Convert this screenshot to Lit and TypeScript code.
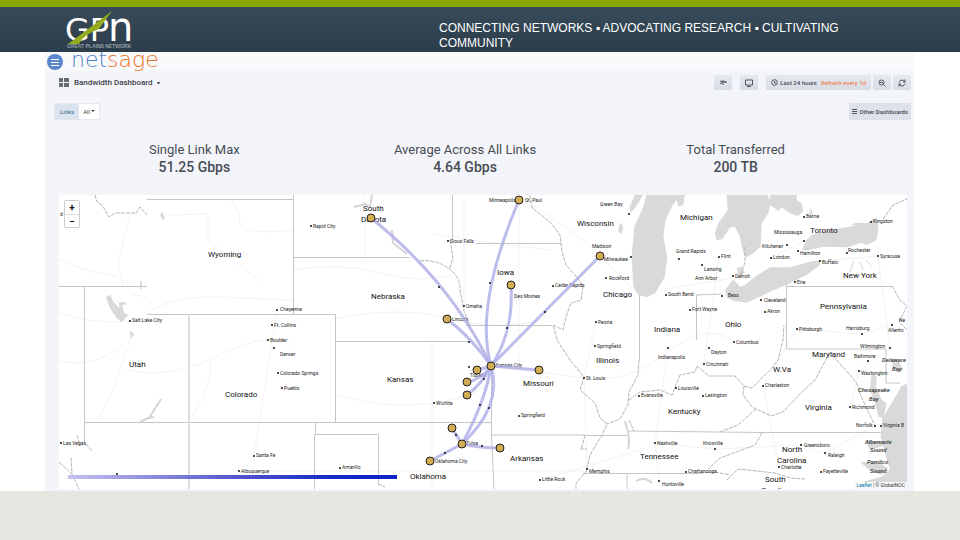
import { LitElement, css, html, svg } from "lit";
import { customElement } from "lit/decorators.js";

type Label = [name: string, x: number, y: number];
type City = [name: string, x: number, y: number, dotX: number, dotY: number];

const states: Label[] = [
  ["Wyoming", 208, 257], ["South", 363, 211], ["Dakota", 361, 222], ["Nebraska", 371, 299],
  ["Wisconsin", 577, 226], ["Iowa", 497, 275], ["Chicago", 603, 297], ["Michigan", 680, 220],
  ["Toronto", 810, 233], ["New York", 843, 278], ["Pennsylvania", 820, 309], ["Ohio", 725, 327],
  ["Indiana", 654, 332], ["Illinois", 596, 363], ["Utah", 129, 367], ["Colorado", 225, 397],
  ["Kansas", 387, 382], ["Missouri", 523, 386], ["Maryland", 812, 357], ["W.Va", 773, 372],
  ["Virginia", 805, 410], ["Kentucky", 668, 414], ["Tennessee", 640, 459], ["Arkansas", 510, 461],
  ["Oklahoma", 410, 479], ["North", 782, 452], ["Carolina", 777, 463], ["South", 765, 482],
  ["Carolina", 761, 493],
];

const cities: City[] = [
  ["d", 60, 216, 0, 0],
  ["Rapid City", 313, 228, 311, 226], ["Sioux Falls", 450, 243, 448, 241],
  ["Cheyenne", 280, 311, 277, 310], ["Ft. Collins", 274, 327, 272, 325],
  ["Boulder", 270, 342, 268, 340], ["Denver", 280, 356, 274, 348],
  ["Colorado Springs", 280, 375, 278, 373], ["Pueblo", 284, 390, 282, 388],
  ["Salt Lake City", 132, 322, 130, 321], ["Las Vegas", 63, 445, 61, 443],
  ["Santa Fe", 256, 457, 254, 456], ["Albuquerque", 241, 473, 239, 471],
  ["Amarillo", 342, 469, 340, 468], ["Wichita", 436, 405, 434, 403],
  ["Omaha", 466, 308, 464, 306], ["Lincoln", 452, 321, 0, 0],
  ["Minneapolis", 489, 202, 0, 0], ["St. Paul", 525, 202, 0, 0],
  ["Green Bay", 600, 206, 629, 214], ["Madison", 592, 248, 0, 0],
  ["Milwaukee", 604, 261, 631, 257], ["Rockford", 609, 280, 606, 278],
  ["Cedar Rapids", 555, 287, 553, 286], ["Des Moines", 514, 298, 0, 0],
  ["Peoria", 598, 324, 596, 322], ["Springfield", 597, 348, 595, 346],
  ["Kansas City", 496, 367, 0, 0], ["Topeka", 470, 377, 469, 367],
  ["St. Louis", 586, 380, 584, 378], ["Springfield", 521, 417, 519, 416],
  ["Tulsa", 466, 445, 0, 0], ["Oklahoma City", 435, 463, 0, 0],
  ["Little Rock", 542, 481, 540, 480], ["Memphis", 589, 473, 587, 469],
  ["Nashville", 657, 445, 655, 443], ["Huntsville", 662, 486, 659, 481],
  ["Chattanooga", 688, 473, 686, 472], ["Knoxville", 703, 445, 715, 449],
  ["Evansville", 641, 397, 639, 396], ["Louisville", 678, 390, 676, 388],
  ["Lexington", 705, 397, 703, 396], ["Indianapolis", 658, 359, 668, 348],
  ["Dayton", 711, 354, 709, 348], ["Cincinnati", 706, 366, 704, 364],
  ["Columbus", 736, 344, 734, 342], ["Fort Wayne", 692, 311, 690, 310],
  ["South Bend", 668, 296, 666, 295], ["Grand Rapids", 676, 253, 679, 259],
  ["Flint", 721, 258, 719, 257], ["Lansing", 704, 271, 702, 265],
  ["Ann Arbor", 695, 280, 0, 0], ["Detroit", 735, 278, 733, 276],
  ["Bess", 728, 297, 722, 296], ["Cleveland", 764, 302, 761, 300],
  ["Akron", 767, 313, 765, 312], ["Erie", 797, 284, 795, 282],
  ["London", 773, 259, 771, 258], ["Kitchener", 762, 248, 787, 245],
  ["Hamilton", 800, 255, 798, 251], ["Mississauga", 774, 234, 804, 241],
  ["Barrie", 806, 218, 804, 217], ["Kingston", 873, 223, 871, 222],
  ["Rochester", 848, 252, 847, 253], ["Buffalo", 822, 264, 820, 261],
  ["Syracuse", 880, 258, 878, 256], ["Pittsburgh", 799, 331, 797, 329],
  ["Harrisburg", 846, 330, 862, 334], ["Allento", 888, 332, 892, 325],
  ["Ne", 899, 322, 0, 0], ["Wilmington", 860, 348, 890, 348],
  ["Baltimore", 854, 358, 868, 361], ["Washington", 861, 375, 859, 371],
  ["Charleston", 765, 387, 763, 386], ["Richmond", 852, 409, 850, 407],
  ["Norfolk", 856, 427, 875, 426], ["Virginia B", 883, 427, 881, 426],
  ["Greensboro", 804, 447, 801, 445], ["Raleigh", 828, 457, 825, 453],
  ["Charlotte", 781, 469, 779, 467], ["Fayetteville", 823, 473, 821, 472],
];

const waters: Label[] = [
  ["Delaware", 882, 362], ["Bay", 892, 371], ["Chesapeake", 858, 392], ["Bay", 869, 401],
  ["Albemarle", 865, 444], ["Sound", 870, 452], ["Pamlico", 867, 464], ["Sound", 870, 473],
];

const links = [
  "M371 218Q451 282 491 366", "M447 319Q472 338 491 366", "M519 200Q474 306 491 366",
  "M511 285Q514 332 491 366", "M600 256Q544 312 491 366", "M539 370L491 366",
  "M477 370L491 366", "M467 382Q481 380 491 366", "M467 395Q482 384 491 366",
  "M462 444Q486 400 491 366", "M462 444Q503 406 491 366", "M462 444L452 428",
  "M462 444L430 461", "M462 444Q480 448 500 448",
];

const nodes: [number, number][] = [
  [371, 218], [519, 200], [600, 256], [511, 285], [447, 319], [491, 366], [539, 370],
  [477, 370], [467, 382], [467, 395], [452, 428], [462, 444], [430, 461], [500, 448],
];

const midpoints: [number, number][] = [
  [439, 287], [490, 283], [507, 328], [545, 312], [469, 342], [484, 379], [480, 405],
  [489, 408], [456, 435], [445, 453], [482, 446], [117, 474],
];

@customElement("network-map")
export class NetworkMap extends LitElement {
  static styles = css`
    :host { display: block; position: relative; background: #fff; }
    .canvas { display: block; width: 100%; height: auto; }
    .water { fill: #d9d9d9; }
    .river { fill: none; stroke: #d5d5d5; stroke-width: 2; }
    .road { fill: none; stroke: #f3f3f3; stroke-width: 1; }
    .border { fill: none; stroke: #c6c6c6; stroke-width: 1; }
    .wide { stroke: #dedede; stroke-width: 2; }
    .dashed { stroke: #b5b5b5; stroke-dasharray: 4 1; }
    .state { font: 8px Roboto, sans-serif; fill: #111; }
    .city { font: 5px Roboto, sans-serif; fill: #222; }
    .sea { font: italic 500 6px Roboto, sans-serif; fill: #333; }
    .dot { fill: #111; }
    .link { fill: none; stroke: #adade8; stroke-opacity: 0.8; stroke-width: 3; }
    .node { fill: #d3ad55; stroke: #222; stroke-width: 1; }
    .zoom {
      position: absolute; left: 5px; top: 5px; display: grid; width: 14px;
      border: 1px solid #ccc; border-radius: 2px; background: #fff;
    }
    .step {
      height: 13px; padding: 0; border: 0; background: none; color: #111;
      font: bold 10px/13px Roboto, sans-serif;
    }
    .step + .step { border-top: 1px solid #ddd; }
    .credit {
      position: absolute; right: 0; bottom: 0; padding: 0 2px; background: #f8f8f8;
      color: #333; font: 5px/7px Roboto, sans-serif;
    }
    .credit a { color: #0078a8; text-decoration: none; }
  `;

  render() {
    return html`
      <svg class="canvas" viewBox="59 195 848 294" role="img" aria-label="Network links map">
        <defs>
          <linearGradient id="scale">
            <stop offset="0" stop-color="#c4c2ee"></stop>
            <stop offset="0.5" stop-color="#5657cc"></stop>
            <stop offset="0.8" stop-color="#1429c8"></stop>
            <stop offset="1" stop-color="#0d23c4"></stop>
          </linearGradient>
        </defs>
        <g class="road">
          <path d="M59 259Q80 270 105 274T130 294L147 297M130 215L118 262L123 288M150 310Q180 295 220 297T293 300M165 215L208 214L208 240L265 285M228 197Q240 208 240 222T293 230M59 312Q90 325 130 321M132 335L115 385L98 420M59 360Q90 370 125 345M130 370Q170 380 220 355T293 345M189 422Q215 380 210 360" />
          <path d="M293 270Q340 262 380 273T452 275M335 319Q400 305 452 319T552 316M335 395Q390 410 434 403T491 380M432 341V489M491 366Q540 372 584 378T668 352T734 342M365 195V257M434 234Q500 245 552 250M464 195V306M519 200V366M519 200Q570 225 600 256T639 293M596 322L584 378L587 469M668 348L655 443L659 481M639 293L740 277M704 364L719 257M655 443L715 449L803 445L825 453L875 426M763 386L797 329L862 334L892 325M850 407L859 371L890 348M254 456L277 310M239 471H587M540 480L640 450M779 467L763 386M820 261L878 256L890 348M771 258L804 241L871 222" />
        </g>
        <g class="water" transform="translate(475 190) scale(0.3333)">
          <path d="M515 12L505 50L478 110L470 200L475 290L490 315L515 322L540 310L570 260L577 200L565 140L572 90L590 50L605 30L610 50L625 45L630 12Z" />
          <path d="M505 12H480L463 55L468 68L490 40ZM432 106L440 98L445 115L439 132L430 125Z" />
        </g>
        <g class="water" transform="translate(690 190) scale(0.3333)">
          <path d="M110 12L113 60L85 100L74 130L80 150L97 148L120 112L135 110L150 140L160 190L168 203L190 190L212 170L215 100L235 70L243 40L232 12Z" />
          <path d="M240 12L240 45L265 62L275 52L300 70L322 78L340 65L335 40L320 30V12ZM358 72L362 52L370 75Z" />
          <path d="M335 180L350 150L365 135L400 123L470 112L500 106L480 105L500 98L530 100L560 82L566 110L560 150L530 165L515 158L470 172L400 170L350 182Z" />
          <path d="M105 300L130 268L150 290L165 285L195 260L240 232L300 232L360 215L390 210V225L350 255L300 280L240 305L200 325L170 338L130 332L110 322ZM140 235L155 230L165 250L145 255Z" />
        </g>
        <g class="water" transform="translate(690 340) scale(0.3333)">
          <path d="M655 130L635 138L605 190L577 235L572 290L585 340L600 388L575 410L520 425L497 450H655Z" />
          <path d="M605 55L625 60L640 90L625 98L608 80ZM545 95L560 110L558 140L575 180L590 190L580 235L565 230L555 190L540 150ZM525 300L575 305L580 318L540 330ZM510 365L570 370L595 385L575 405L540 392Z" />
        </g>
        <g class="water" transform="translate(55 190) scale(0.3333)">
          <path d="M153 322L165 314L175 335L193 355L192 337L213 337V343L202 345L206 367L220 376L200 397L185 385L165 355ZM225 422L238 432L226 447ZM315 73L322 66L330 85L323 90ZM255 275L261 272V295L255 300Z" />
        </g>
        <g class="river">
          <path d="M354 207L365 204L370 207L372 195M392 230L393 243L407 254M140 422L148 418L154 417M149 418L161 399M625 421Q631 440 628 449M636 481Q645 476 652 483" />
          <path d="M854 261L850 272M860 262L863 270M866 260L872 267" stroke-width="1" />
        </g>
        <g class="border">
          <path d="M147 199.500H293.500M293.500 195V314M147 314.500H335.500V422M59 286.500H147M84.500 286V442M84.500 422.500H491M293.500 257.500H410M452.500 195V240M335.500 341.500H474M314.500 489V434.500H378.500V484M315.500 422V434M491.500 372V435H585M491.500 435L494 489M466 325.500H552M476 243.500H561M639.500 295V360M586 435.500H627M629 431L762 432.500H881M583 473.500H700M627 474V489M696 295L722 294M696.500 295V340M786.500 284V349H886V383H900M786 286.500H893" />
          <path class="wide" d="M189 314V489" />
        </g>
        <g class="border dashed">
          <path d="M95 195L97 202L102 205L109 217L115 213L136 213L140 207L147 215M420 261Q435 259 448 268T460 290L464 311L470 325M450 240L453 258L450 268M530 195L532 208L550 222L560 235L562 252L566 265L575 275L583 286L581 300L571 303L566 317L563 330L553 325L557 340L570 360L584 377L580 390L595 403L600 418L607 424L602 435L590 455L586 472L576 483V489M585 435L582 447L580 449H587M639 360L638 375L629 392L628 405L620 419L607 424M629 400L640 392L660 390L672 395L680 375L695 372L697 366L709 376L735 376L744 386L752 388L770 370L778 360L783 340L784 325M744 386L743 395L752 407L771 416L783 412L799 395L815 380L830 352L841 365L856 382L861 396L875 426M756 409L738 425L720 432M762 433L755 445L720 458L708 469M700 473L715 472L730 475M727 480L738 469L775 473L790 478L805 479M883 219L893 205L907 199M745 247V262L740 278M892 286L900 300L907 306L899 322L907 330M59 462L72 474L71 457M72 474L79 489M629 420L634 431M378 484L385 487M77 435L80 446M86 444L92 451" />
        </g>
        ${cities.map(([name, x, y, dx, dy]) => svg`
          ${dx ? svg`<circle class="dot" cx=${dx} cy=${dy} r="1"></circle>` : ""}
          <text class="city" x=${x} y=${y}>${name}</text>`)}
        ${states.map(([name, x, y]) => svg`<text class="state" x=${x} y=${y}>${name}</text>`)}
        ${waters.map(([name, x, y]) => svg`<text class="sea" x=${x} y=${y}>${name}</text>`)}
        ${links.map((d) => svg`<path class="link" d=${d}></path>`)}
        ${midpoints.map(([x, y]) => svg`<circle class="dot" cx=${x} cy=${y} r="1"></circle>`)}
        ${nodes.map(([x, y]) => svg`<circle class="node" cx=${x} cy=${y} r="4"></circle>`)}
        <rect x="68" y="475" width="329" height="4" fill="url(#scale)"></rect>
      </svg>
      <div class="zoom">
        <button class="step" aria-label="Zoom in">+</button>
        <button class="step" aria-label="Zoom out">−</button>
      </div>
      <div class="credit"><a href="#leaflet">Leaflet</a> | © GlobalNOC</div>
    `;
  }
}

@customElement("app-root")
export class AppRoot extends LitElement {
  static styles = css`
    :host {
      display: flex; flex-direction: column; min-height: 100vh; background: #fff;
      font-family: Roboto, sans-serif; color: #464c54;
    }
    * { box-sizing: border-box; }
    .banner {
      display: grid; grid-template-columns: 439px 1fr; height: 52px;
      border-top: 7px solid #8aa400; background: linear-gradient(#394b5a, #2b3d4a);
    }
    .brand { display: block; width: 76px; height: 45px; margin-left: 64px; }
    .brand-name { font: 32px "DejaVu Sans", sans-serif; fill: #fff; }
    .brand-n { font-size: 40px; }
    .brand-sub { font: bold 5px "Liberation Sans", sans-serif; fill: #93a0a8; }
    .motto {
      margin: 0; padding: 14px 90px 0 0; color: #fff;
      font: 12px/15px "Liberation Sans", sans-serif;
    }
    .panel {
      margin: 0 46px 0 45px; padding: 0 7px 2px 14px;
      background: linear-gradient(#f8f9fb 18px, #f4f5fa 19px);
    }
    .product { display: flex; align-items: center; gap: 8px; height: 19px; margin-left: -12px; }
    .menu {
      width: 16px; height: 16px; padding: 0; border: 0; border-radius: 50%; background: #5b86cb;
    }
    .icon { display: block; fill: none; stroke: #50565e; stroke-width: 1; }
    .menu .icon { stroke: #fff; }
    .netsage { font: 200 22px/16px "DejaVu Sans", sans-serif; color: #4f83c4; margin-top: -4px; }
    .sage { color: #ee7325; }
    .toolbar { display: flex; align-items: center; height: 23px; margin-right: -4px; }
    .title {
      display: flex; align-items: center; gap: 5px; margin: 0 auto 0 0; color: #3b4047;
      font-size: 8px; font-weight: 500;
    }
    .name { display: flex; align-items: center; gap: 4px; }
    .tool {
      display: flex; align-items: center; justify-content: center; gap: 2px; height: 15px;
      min-width: 18px; padding: 0 5px; border: 0; border-radius: 1px; color: #40464e;
      background: linear-gradient(#e6e9ef, #d8dce5); font: 500 6px Roboto, sans-serif;
    }
    .spaced { margin-right: 8px; }
    .near { margin-right: 2px; }
    .tool .icon { flex: none; }
    .refresh { margin-left: 2px; color: #f08050; }
    .filters {
      display: flex; justify-content: space-between; align-items: center; height: 34px;
      margin: 0 -4px 0 -5px;
    }
    .filter { display: flex; height: 17px; border: 1px solid #e4e7ec; background: #fff; font-size: 6px; }
    .filter-name { padding: 0 5px; background: #dbe4ee; color: #29648c; line-height: 15px; }
    .choice {
      width: 20px; padding: 0 0 0 4px; border: 0; appearance: none; color: #444;
      background: #fff; font: 6px Roboto, sans-serif;
    }
    .select { position: relative; display: flex; }
    .caret { position: absolute; right: 4px; top: 6px; fill: #444; pointer-events: none; }
    .dashboards { height: 17px; padding: 0 3px; background: #dde2ea; }
    .stats {
      display: grid; grid-template-columns: repeat(3, 1fr); height: 67px; margin: 0;
      padding: 13px 36px 0 0; text-align: center;
    }
    .stat-name { font: 13px/17px Roboto, sans-serif; }
    .stat-value { margin: 0; font: 500 14px/18px Roboto, sans-serif; }
    .footer { flex: 1; background: #e7e7e1; }
  `;

  render() {
    return html`
      <header class="banner">
        <svg class="brand" viewBox="64 7 76 45" role="img" aria-label="Great Plains Network">
          <text class="brand-name" x="65" y="41">GP<tspan class="brand-n" dx="-1">n</tspan></text>
          <path d="M112 11L96 23L68 44H79Q83 35 99 29Z" fill="#94ab20" />
          <text class="brand-sub" x="67" y="48">GREAT PLAINS NETWORK</text>
        </svg>
        <p class="motto">CONNECTING NETWORKS ▪ ADVOCATING RESEARCH ▪ CULTIVATING COMMUNITY</p>
      </header>
      <main class="panel">
        <div class="product">
          <button class="menu" aria-label="Menu">
            <svg class="icon" width="16" height="16"><path d="M4 5.500H12M4 8.500H12M4 11.500H12" /></svg>
          </button>
          <span class="netsage">net<span class="sage">sage</span></span>
        </div>
        <div class="toolbar">
          <h1 class="title">
            <svg width="10" height="9" fill="#686d73"><path d="M0 0H4V4H0ZM5 0H10V4H5ZM0 5H4V9H0ZM5 5H10V9H5Z" /></svg>
            <span class="name">Bandwidth Dashboard
              <svg width="3" height="2" fill="#3b4047"><path d="M0 0H3L2 2H1Z" /></svg>
            </span>
          </h1>
          <button class="tool spaced" aria-label="Share">
            <svg class="icon" width="8" height="8"><path d="M1 2L4 3H8M4 1V6M1 5L4 3M6 2V4" /></svg>
          </button>
          <button class="tool spaced" aria-label="Cycle view">
            <svg class="icon" width="8" height="8"><path d="M.5 1H7.500V6H.5ZM2 7.500H6" /></svg>
          </button>
          <button class="tool near">
            <svg class="icon" width="7" height="7"><circle cx="3.500" cy="3.500" r="2.800" /><path d="M3.500 2V4H5" /></svg>
            Last 24 hours <span class="refresh">Refresh every 1d</span>
          </button>
          <button class="tool near" aria-label="Zoom out time range">
            <svg class="icon" width="8" height="8"><circle cx="3.500" cy="3.500" r="2.500" /><path d="M2 3.500H5M5.500 5.500L7.500 7.500" /></svg>
          </button>
          <button class="tool" aria-label="Refresh">
            <svg class="icon" width="8" height="8"><path d="M1 3.500Q2 1 4 1T7 3M7 .5V3H5M7 4.500Q6 7 4 7T1 5M1 7.500V5H3" /></svg>
          </button>
        </div>
        <div class="filters">
          <div class="filter">
            <label class="filter-name" for="links">Links</label>
            <span class="select">
              <select class="choice" id="links"><option>All</option></select>
              <svg class="caret" width="4" height="3"><path d="M0 0H4L2 2Z" /></svg>
            </span>
          </div>
          <button class="tool dashboards">
            <svg class="icon" width="6" height="6"><path d="M0 1.500H5M0 3.500H5M0 5.500H5" /></svg>
            Other Dashboards
          </button>
        </div>
        <dl class="stats">
          <div><dt class="stat-name">Single Link Max</dt><dd class="stat-value">51.25 Gbps</dd></div>
          <div><dt class="stat-name">Average Across All Links</dt><dd class="stat-value">4.64 Gbps</dd></div>
          <div><dt class="stat-name">Total Transferred</dt><dd class="stat-value">200 TB</dd></div>
        </dl>
        <network-map></network-map>
      </main>
      <footer class="footer"></footer>
    `;
  }
}
